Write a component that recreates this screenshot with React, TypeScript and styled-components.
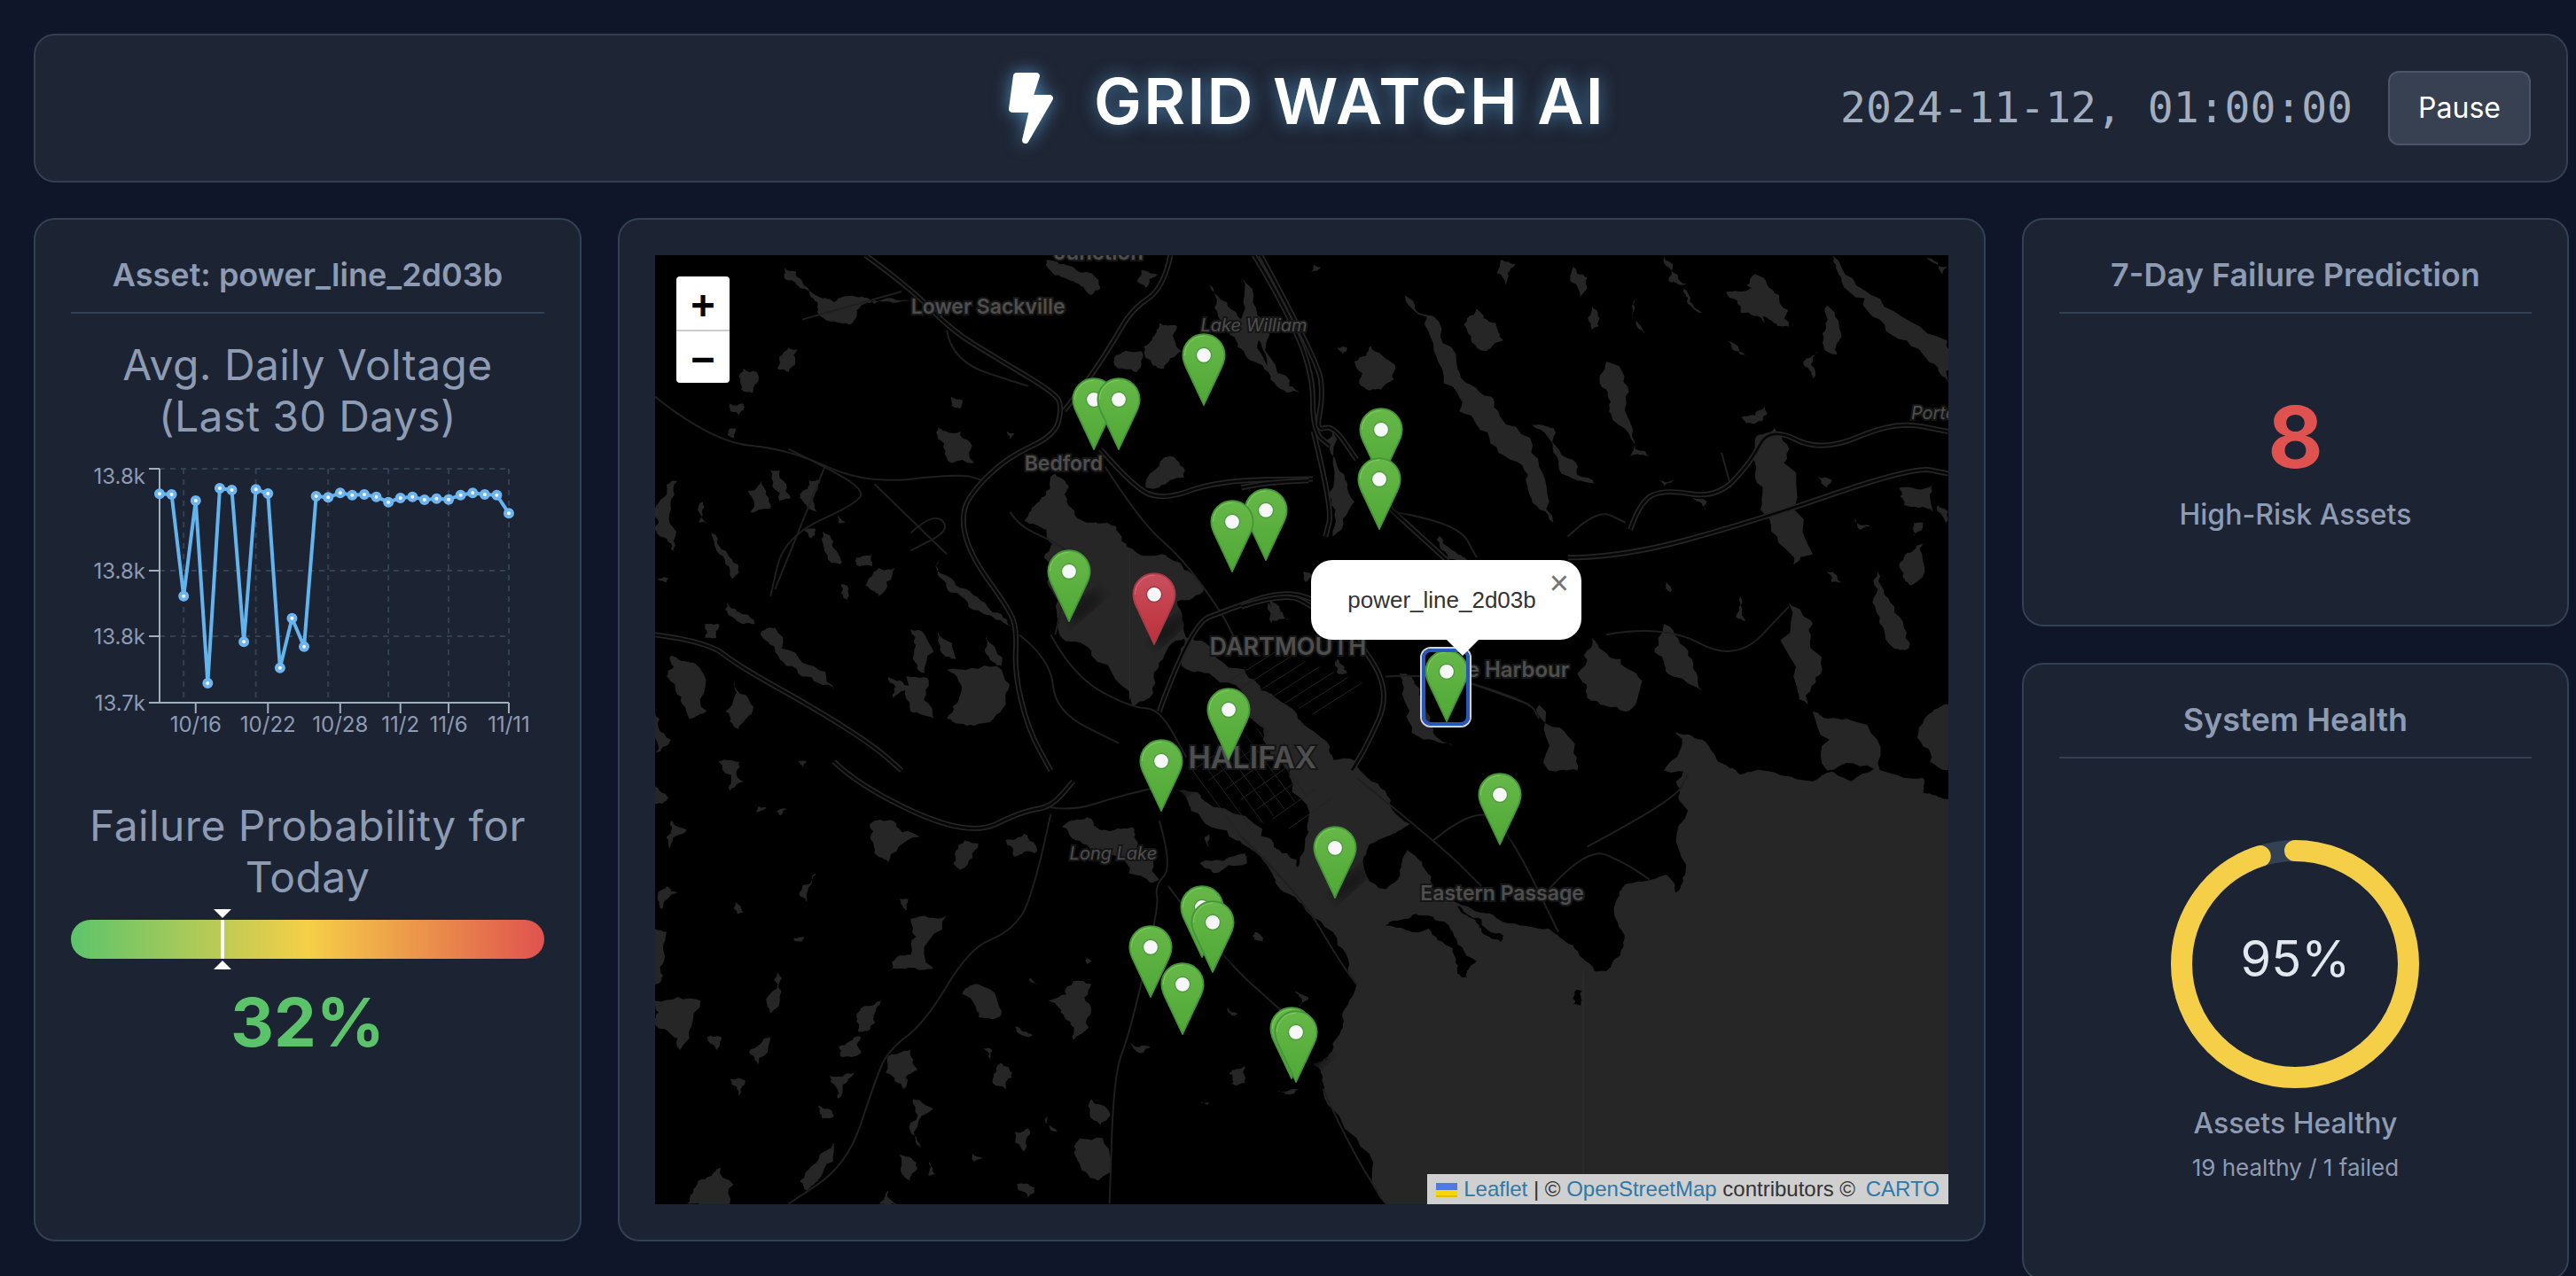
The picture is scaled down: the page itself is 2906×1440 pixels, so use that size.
import React from "react";
import styled, { createGlobalStyle } from "styled-components";
import { FaBolt } from "react-icons/fa";

const GlobalStyle = createGlobalStyle`
html, body {
    margin: 0;
    height: 100%;
    overflow: hidden;
    background: #0f1629;
    font-family: Inter, "Noto Sans", sans-serif;
}
*, *::before, *::after { box-sizing: border-box; }
`

// ---- voltage chart data, read off the plot ----
const voltage = [139,141,485,162,780,120,126,640,124,138,728,560,656,147,151,136,143,141,149,167,153,149,159,155,158,143,136,141,143,205]
const chartX = (i: number) => 100 + i * (394 / 29)
const chartY = (v: number) => 10 + v / 3
const AXIS_TOP = 28, AXIS_BOTTOM = 292, AXIS_LEFT = 100, AXIS_RIGHT = 494
const yTicks = [
    { y: AXIS_TOP, label: "13.8k", dy: 17 },
    { y: 143, label: "13.8k", dy: 9 },
    { y: 217, label: "13.8k", dy: 9 },
    { y: AXIS_BOTTOM, label: "13.7k", dy: 9 },
]
const xTicks = [{ i: 3, label: "10/16" }, { i: 9, label: "10/22" }, { i: 15, label: "10/28" }, { i: 20, label: "11/2" }, { i: 24, label: "11/6" }, { i: 29, label: "11/11" }]
const gridCols = [2, 8, 14, 19, 24, 29]

const VoltageChart = () => (
    <ChartSvg width={534} height={340} viewBox="0 0 534 340">
        {gridCols.map((i) => (
            <line key={i} x1={chartX(i)} x2={chartX(i)} y1={AXIS_TOP} y2={AXIS_BOTTOM} stroke="#334155" strokeWidth={2} strokeDasharray="6 6" />
        ))}
        {yTicks.slice(0, 3).map((t) => (
            <line key={t.y} x1={AXIS_LEFT} x2={AXIS_RIGHT} y1={t.y} y2={t.y} stroke="#334155" strokeWidth={2} strokeDasharray="6 6" />
        ))}
        <path d={`M${AXIS_LEFT} ${AXIS_TOP}V${AXIS_BOTTOM}H${AXIS_RIGHT}`} fill="none" stroke="#a0aec0" strokeWidth={2} />
        {yTicks.map((t) => (
            <g key={t.y}>
                <line x1={AXIS_LEFT - 12} x2={AXIS_LEFT} y1={t.y} y2={t.y} stroke="#a0aec0" strokeWidth={2} />
                <ChartText x={AXIS_LEFT - 16} y={t.y + t.dy} textAnchor="end">{t.label}</ChartText>
            </g>
        ))}
        {xTicks.map((t) => (
            <g key={t.label}>
                <line x1={chartX(t.i)} x2={chartX(t.i)} y1={AXIS_BOTTOM} y2={AXIS_BOTTOM + 12} stroke="#a0aec0" strokeWidth={2} />
                <ChartText x={chartX(t.i)} y={AXIS_BOTTOM + 33} textAnchor="middle">{t.label}</ChartText>
            </g>
        ))}
        <polyline fill="none" stroke="#63b3ed" strokeWidth={4} strokeLinejoin="round"
            points={voltage.map((v, i) => `${chartX(i)},${chartY(v)}`).join(" ")} />
        {voltage.map((v, i) => (
            <circle key={i} cx={chartX(i)} cy={chartY(v)} r={4} fill="#fff" stroke="#6db5f0" strokeWidth={4} />
        ))}
    </ChartSvg>
)

// ---- map drawing. each block is in the coordinates of one quarter of the map ----
const Q4 = "translate(700 250) scale(0.5102 0.3954)"
const Q5 = "translate(1400 250) scale(0.542 0.3954)"
const Q6 = "translate(700 860) scale(0.5102 0.37)"
const Q7 = "translate(1400 860) scale(0.542 0.37)"

const waterQ4 = [
    "892,855 925,800 960,720 990,760 985,800 1040,860 1075,860 1120,930 1195,950 1245,995 1290,1050 1230,1085 1250,1190 1190,1260 1155,1370 1130,1385 1040,1240 975,1190 965,1160 945,1040 935,960 940,880",
    "1245,1190 1320,1250 1400,1340 1470,1410 1568,1500 1568,1568 1480,1568 1420,1480 1380,1390 1300,1290 1240,1270",
    "360,130 400,170 430,210 470,230 520,215 560,235 640,228 560,225 530,240 505,295 440,270 425,220 395,190 360,160",
    "940,110 1000,130 1060,190 1040,210 1000,170 950,140", "1150,140 1190,150 1160,190 1140,170",
    "1300,180 1340,230 1400,300 1470,440 1500,490 1450,470 1400,400 1360,340 1320,270", "1090,390 1150,370 1140,430 1090,410",
    "1190,290 1230,300 1240,370 1200,420 1160,390 1175,330", "1160,760 1215,670 1245,730 1190,760",
    "730,500 755,510 750,535 730,525", "700,590 750,600 770,670 780,690 730,690 700,620", "855,600 870,605 860,620",
    "370,360 390,365 370,430 345,420", "270,420 300,430 290,490 265,480", "240,520 270,520 260,555 240,540", "240,590 255,590 250,620 235,610",
    "330,710 350,710 375,790 350,800", "415,740 440,740 425,790 435,830 410,810 395,780", "280,770 310,740 330,820 285,830",
    "180,800 190,860 170,860", "100,750 125,740 105,850 120,950 85,900 74,880 74,820",
    "200,890 240,960 260,1000 245,1020 210,940", "405,880 430,880 420,905", "445,885 480,950 485,980 465,975", "480,840 495,860 480,860",
    "520,960 555,950 555,985 520,980", "570,990 605,990 570,1070 540,1040", "485,1035 500,1040 500,1080 485,1060",
    "700,960 740,1040 810,1100 860,1155 800,1120 730,1060 700,1010", "235,1090 265,1120 295,1150 270,1150 235,1120",
    "310,1170 340,1160 400,1260 470,1340 400,1300 340,1230", "185,1150 215,1150 210,1190 185,1190",
    "640,1165 665,1170 670,1290 650,1260", "700,1170 740,1250 715,1240", "810,1180 840,1270 825,1260", "590,1300 640,1330 600,1360",
    "720,1280 830,1270 850,1380 780,1440 720,1420 750,1350", "630,1300 680,1310 690,1420 640,1400",
    "110,1240 160,1260 190,1400 150,1420 120,1340 100,1300", "250,1310 290,1400 260,1450 230,1400", "74,1400 110,1480 74,1520",
    "80,1020 105,1020 100,1030", "1430,1090 1460,1110 1440,1150", "1510,1000 1530,1010 1515,1030",
]
const waterQ5 = [
    "0,1290 60,1350 130,1450 185,1568 100,1568 60,1480 0,1400",
    "340,210 400,270 450,420 520,500 540,560 620,700 650,860 600,780 560,680 490,580 450,490 400,350",
    "490,250 530,290 545,340 510,370 470,310", "605,580 650,590 690,680 735,750 700,740 650,660",
    "760,400 800,500 820,650 850,670 810,670 770,550 760,480", "235,400 270,355 320,410 290,480 250,470", "200,360 220,360 210,380", "150,120 165,130 145,145",
    "540,110 570,120 550,180", "690,130 720,160 700,220 685,170", "880,100 930,180 890,170", "1010,200 1060,190 1090,290 1040,260",
    "730,240 745,300 730,310", "820,220 840,320 820,280", "920,190 960,260 930,220", "1230,96 1330,220 1470,340 1472,460 1420,380 1330,280 1250,170",
    "1420,100 1470,130 1460,150", "1070,150 1120,210 1140,300 1100,280 1060,220", "1220,240 1250,330 1240,380 1210,320", "1010,340 1050,380 1040,380",
    "1170,400 1200,370 1190,450", "1040,560 1090,530 1085,570 1050,575", "1070,620 1110,590 1130,690 1190,950 1150,980 1100,850 1070,730",
    "1200,730 1230,740 1220,760", "1370,760 1440,750 1440,830 1380,810", "1270,840 1310,870 1290,880", "1400,860 1420,860 1400,900",
    "1380,960 1420,920 1395,1040 1380,1020", "1450,810 1472,830 1472,870", "1325,1000 1360,1100 1390,1220 1360,1220 1320,1100",
    "1220,1000 1250,1030 1230,1030", "1040,1070 1050,1140 1030,1130", "885,1030 895,1060 885,1050", "410,890 440,940 470,970 430,960",
    "1140,1090 1190,1150 1210,1280 1180,1380 1150,1300", "1190,1400 1260,1420 1330,1568 1220,1568",
    "730,1190 790,1250 830,1340 800,1400 720,1360 700,1290", "880,1150 930,1240 960,1340 900,1300 860,1230", "900,1450 960,1480 1000,1568 880,1568",
    "620,1380 680,1470 700,1568 640,1568", "1440,1400 1472,1380 1472,1568 1420,1500", "330,1290 360,1320 400,1450 440,1500 380,1480 340,1370",
    "200,1250 220,1290 200,1290", "190,600 200,700 235,800 190,900 180,780", "60,1080 100,1140 60,1140", "0,160 50,300 100,470 60,440 0,300",
    "870,740 900,740 880,760", "940,790 970,800 965,830",
]
const waterQ6 = [
    "1225,85 1290,120 1420,260 1500,330 1568,360 1568,450 1500,430 1440,320 1360,240 1260,150", "1500,0 1568,0 1568,280 1520,180",
    "215,0 260,0 270,60 240,90", "390,0 410,0 400,20", "74,70 105,110 74,130", "295,130 320,140 300,155", "340,150 375,140 350,165",
    "110,180 145,210 105,270 100,230", "100,380 125,400 90,450 80,420", "400,380 430,340 410,430 395,410", "250,430 270,460 255,465",
    "550,190 600,180 660,230 590,310 560,280", "760,240 790,250 750,330 735,310", "850,240 890,220 915,280 870,290",
    "975,200 1030,170 1090,210 1130,200 1140,260 1190,360 1170,370 1100,290 1020,250", "1280,310 1380,280 1385,310 1310,340", "1290,230 1300,220 1300,260",
    "640,480 720,470 690,630 650,630 590,640 600,610 640,590", "615,420 635,420 630,455", "380,540 405,530 395,550",
    "74,510 100,520 90,620 74,680", "74,730 175,730 130,880 100,820 74,800", "190,840 220,840 210,880", "300,870 330,840 300,930 285,880",
    "520,780 575,730 550,820 525,825", "755,710 790,680 840,775 790,780", "945,730 1000,670 1040,680 1040,760 1000,850 980,780",
    "480,870 530,840 530,890 485,900", "590,900 640,880 655,940 625,1000 585,950", "460,960 515,950 480,1030", "240,970 275,975 260,1020",
    "800,875 820,880 815,910", "840,920 865,950 850,1000 830,990", "870,810 910,835 895,840", "1125,860 1170,870 1150,890", "345,640 355,660 330,770 322,740",
    "645,1030 690,1060 665,1180 640,1130", "435,1050 470,1080 445,1090", "940,1080 965,1130 950,1125", "870,1130 900,1120 890,1190", "1015,1150 1065,1150 1055,1280 1010,1220",
    "615,1200 655,1240 640,1280", "680,1220 695,1260 680,1265", "395,1280 450,1190 470,1165 440,1270 410,1310", "145,1350 170,1280 220,1240 240,1350",
    "875,1290 915,1300 900,1330", "770,1190 800,1210 780,1220", "1040,1030 1075,1060 1060,1110", "570,1350 590,1310 610,1350",
    "1345,950 1380,930 1380,980 1350,985", "1450,1005 1500,1000 1470,1015", "1340,750 1365,770 1350,775", "1490,700 1520,720 1500,750",
    "1400,520 1420,550 1400,545", "1030,600 1040,610 1030,620", "1530,920 1568,900 1568,980", "905,660 920,680 905,675", "1280,1040 1300,1040 1295,1050",
]
const ocean = "125,0 240,0 300,90 350,190 310,225 265,255 255,290 285,385 300,390 330,340 345,270 395,350 400,390 480,450 545,490 640,510 690,560 735,640 760,640 790,590 798,530 782,420 800,375 850,362 885,345 905,400 925,340 930,150 905,60 925,20 990,0 1040,40 1100,30 1190,60 1230,30 1270,60 1320,20 1420,50 1420,95 1472,115 2100,130 2100,2000 340,2000 300,1351 240,1150 170,1010 165,950 190,860 210,780 240,680 200,560 120,420 85,395 50,310 0,250 0,215 60,235 115,330 150,180 125,60"
const islands = ["390,470 440,520 490,610 470,660 450,640 440,570 390,510 300,500 340,480", "450,440 500,480 545,530 540,550 500,510 470,470", "695,700 710,700 705,745 692,740"]

// breaks the straight edges of a shape up into a coast line, same result every run
const rough = (pts: string, amp = 0.2) => {
    let p = pts.split(" ").map((s) => s.split(",").map(Number))
    let seed = pts.length * 97 + p[0][0] * 13 + p[0][1] * 7
    const rand = () => {
        seed = (seed * 16807) % 2147483647
        return (seed % 2000) / 1000 - 1
    }
    for (let round = 0; round < 3; round++) {
        const next: number[][] = []
        p.forEach((a, i) => {
            const b = p[(i + 1) % p.length]
            const dx = b[0] - a[0], dy = b[1] - a[1]
            const r = rand() * amp
            next.push(a, [(a[0] + b[0]) / 2 - dy * r, (a[1] + b[1]) / 2 + dx * r])
        })
        p = next
    }
    return p.map((v) => `${v[0].toFixed(1)},${v[1].toFixed(1)}`).join(" ")
}

const smooth = (pts: string) => {
    const p = pts.split(" ").map((s) => s.split(",").map(Number))
    let d = `M${p[0][0]} ${p[0][1]}`
    for (let i = 1; i < p.length - 1; i++) {
        d += `Q${p[i][0]} ${p[i][1]} ${(p[i][0] + p[i + 1][0]) / 2} ${(p[i][1] + p[i + 1][1]) / 2}`
    }
    return d + `L${p[p.length - 1][0]} ${p[p.length - 1][1]}`
}

const highways = [
    { q: Q4, pts: "540,96 640,190 730,310 830,390 960,490 975,530 960,610 860,670 790,750 750,830 770,950 860,1110 875,1170 870,1290 900,1450 950,1568" },
    { q: Q4, pts: "1215,96 1200,190 1130,250 1090,340 1040,440 980,540" },
    { q: Q4, pts: "74,1180 190,1200 260,1270 440,1400 560,1500 620,1568" },
    { q: Q4, pts: "1400,96 1450,200 1530,420 1530,600 1568,640" },
    { q: Q4, pts: "1060,650 1120,740 1190,800 1320,740 1530,735" },
    { q: Q4, pts: "1190,1400 1260,1150 1340,1110 1470,1050 1568,1100" },
    { q: Q5, pts: "40,96 160,400 170,500 155,600 190,580 240,680" },
    { q: Q5, pts: "150,600 190,820 175,900" },
    { q: Q5, pts: "140,740 60,745 0,760" },
    { q: Q5, pts: "310,820 430,970" },
    { q: Q5, pts: "680,960 790,960 1060,860 1400,700 1472,720" },
    { q: Q5, pts: "810,880 830,800 880,765 990,790 1060,690 1100,585 1210,660 1360,570 1472,600" },
    { q: Q5, pts: "0,1100 90,1060 150,1100 250,1200 310,1350 260,1500 230,1568" },
    { q: Q6, pts: "470,0 530,80 770,230 890,150 950,140 1000,60" },
]
const minorRoads = [
    { q: Q4, pts: "74,500 200,630 370,650 540,750 750,720 800,740" },
    { q: Q4, pts: "370,650 450,700 530,760 530,800 360,900 330,1070" },
    { q: Q4, pts: "560,750 680,900 720,950" },
    { q: Q4, pts: "1070,700 1150,860 1240,960 1330,1120 1360,1200" },
    { q: Q4, pts: "860,830 880,870 950,910 1000,950 960,1180" },
    { q: Q4, pts: "640,890 690,830 730,880 640,940" },
    { q: Q4, pts: "340,1050 450,700" },
    { q: Q4, pts: "950,1180 1000,1300 1130,1390 1190,1390 1250,1530" },
    { q: Q4, pts: "880,1180 950,1250 960,1400 1100,1490" },
    { q: Q4, pts: "400,280 620,200" },
    { q: Q4, pts: "720,310 730,400 900,470" },
    { q: Q5, pts: "480,1320 600,1370 620,1420" },
    { q: Q5, pts: "760,1180 880,1150 1030,1260 1140,1100" },
    { q: Q5, pts: "1000,660 1020,760" },
    { q: Q5, pts: "680,900 740,820 800,860" },
    { q: Q5, pts: "320,830 450,860 490,960" },
    { q: Q5, pts: "300,1300 420,1290 600,1380" },
    { q: Q6, pts: "950,160 910,420 860,520 770,570 670,800 590,880 560,980 500,1230 370,1350" },
    { q: Q6, pts: "1190,180 1220,320 1180,380 1190,440 1125,830 1090,950 1080,1350" },
    { q: Q6, pts: "1210,380 1330,600 1460,760" },
    { q: Q6, pts: "950,140 1000,150 1090,110 1180,80" },
    { q: Q7, pts: "0,230 120,400 200,600 240,680" },
    { q: Q7, pts: "400,240 500,120 570,250 660,520" },
    { q: Q7, pts: "640,390 720,260 800,310 850,360" },
    { q: Q7, pts: "720,260 900,120 930,40" },
    { q: Q7, pts: "240,50 410,250 500,380" },
    { q: Q7, pts: "170,1000 220,1160 290,1330" },
]

// street grids of Halifax and Dartmouth, in page pixels
const streets: string[] = []
for (let i = 0; i < 7; i++) {
    streets.push(`M${1345 + i * 18} ${870 + i * 11}L${1395 + i * 18} ${835 + i * 11}`)
    streets.push(`M${1345 + i * 12} ${870 - i * 8}L${1400 + i * 12} ${945 - i * 8}`)
    streets.push(`M${1385 + i * 16} ${770 + i * 6}L${1440 + i * 16} ${735 + i * 6}`)
}

const labels = [
    { x: 1188, y: 293, size: 24, text: "Junction", anchor: "start" },
    { x: 1027, y: 354, size: 23, text: "Lower Sackville", anchor: "start" },
    { x: 1354, y: 374, size: 20, text: "Lake William", anchor: "start", italic: true },
    { x: 1155, y: 531, size: 23, text: "Bedford", anchor: "start" },
    { x: 1364, y: 739, size: 27, text: "DARTMOUTH", anchor: "start" },
    { x: 1770, y: 764, size: 24, text: "Cole Harbour", anchor: "end" },
    { x: 2156, y: 473, size: 20, text: "Porte", anchor: "start", italic: true },
    { x: 1340, y: 868, size: 34, text: "HALIFAX", anchor: "start" },
    { x: 1206, y: 971, size: 20, text: "Long Lake", anchor: "start", italic: true },
    { x: 1602, y: 1017, size: 23, text: "Eastern Passage", anchor: "start" },
]

type Pin = { x: number; y: number; failed?: boolean; selected?: boolean }
// tip of each pin in page pixels, south-most last so they stack as in the map
const pins: Pin[] = [
    { x: 1357, y: 457 }, { x: 1233, y: 507 }, { x: 1261, y: 507 }, { x: 1557, y: 541 }, { x: 1555, y: 597 },
    { x: 1427, y: 632 }, { x: 1389, y: 645 }, { x: 1205, y: 701 }, { x: 1301, y: 727, failed: true },
    { x: 1631, y: 814, selected: true }, { x: 1385, y: 857 }, { x: 1309, y: 915 }, { x: 1691, y: 953 }, { x: 1505, y: 1013 },
    { x: 1355, y: 1080 }, { x: 1367, y: 1097 }, { x: 1297, y: 1125 }, { x: 1333, y: 1167 }, { x: 1456, y: 1217 }, { x: 1461, y: 1221 },
]

const MapBackdrop = () => (
    <MapSvg viewBox="738 288 1460 1072" preserveAspectRatio="none">
        <defs>
            <filter id="pin-blur"><feGaussianBlur stdDeviation="7" /></filter>
            <linearGradient id="pin-green" x1="0" y1="0" x2="0" y2="1">
                <stop offset="0" stopColor="#66b848" />
                <stop offset="1" stopColor="#4fa836" />
            </linearGradient>
            <linearGradient id="pin-red" x1="0" y1="0" x2="0" y2="1">
                <stop offset="0" stopColor="#c8505f" />
                <stop offset="1" stopColor="#bd2f38" />
            </linearGradient>
        </defs>
        <rect x="738" y="288" width="1460" height="1072" fill="#000" />
        <g fill="#262626">
            <g transform={Q7}>
                <polygon points={rough(ocean, 0.12)} />
            </g>
            <g transform={Q4}>{waterQ4.map((p) => <polygon key={p} points={rough(p)} />)}</g>
            <g transform={Q5}>{waterQ5.map((p) => <polygon key={p} points={rough(p)} />)}</g>
            <g transform={Q6}>{waterQ6.map((p) => <polygon key={p} points={rough(p)} />)}</g>
        </g>
        <g transform={Q7} fill="#000">{islands.map((p) => <polygon key={p} points={rough(p)} />)}</g>
        <path d="M1786 1097V1326M1274 625V790" stroke="#2e2e2e" strokeWidth={1} />
        <path d={streets.join("")} stroke="#222" strokeWidth={1} fill="none" />
        {minorRoads.map((r) => (
            <g key={r.pts} transform={r.q}><MinorRoad d={smooth(r.pts)} /></g>
        ))}
        {highways.map((r) => (
            <g key={r.pts} transform={r.q}>
                <RoadCasing d={smooth(r.pts)} />
                <RoadCore d={smooth(r.pts)} />
            </g>
        ))}
        {pins.map((p) => (
            <ellipse key={`${p.x}-${p.y}`} cx={p.x + 18} cy={p.y - 16} rx={26} ry={8} fill="#000" opacity={0.45}
                filter="url(#pin-blur)" transform={`rotate(-42 ${p.x + 18} ${p.y - 16})`} />
        ))}
        {labels.map((l) => (
            <MapLabel key={l.text} x={l.x} y={l.y} fontSize={l.size} textAnchor={l.anchor} $italic={l.italic}>{l.text}</MapLabel>
        ))}
    </MapSvg>
)

const PIN_PATH = "M12.5 .6C5.9 .6 .7 5.9 .7 12.4c0 2.4.7 4.5 1.7 6.6L12.5 40.4 22.6 19c1-2.1 1.7-4.2 1.7-6.6C24.3 5.9 19.1.6 12.5.6z"

const MapPin = ({ x, y, failed }: Pin) => (
    <PinSvg viewBox="0 0 25 41" style={{ left: x - 25 - 738, top: y - 81 - 288 }}>
        <path d={PIN_PATH} fill={`url(#${failed ? "pin-red" : "pin-green"})`} stroke={failed ? "#a83a48" : "#46953a"} strokeWidth={0.9} />
        <path d="M12.5 1.6C6.5 1.6 1.7 6.4 1.7 12.4" fill="none" stroke={failed ? "#d76f7d" : "#82cc62"} strokeWidth={0.5} />
        <circle cx={12.5} cy={12.4} r={4.3} fill="#f7f7f7" stroke={failed ? "#9c3442" : "#4e9a3f"} strokeWidth={0.7} />
    </PinSvg>
)

const App = () => {
    return (
        <Page>
            <GlobalStyle />
            <Header>
                <span />
                <Title>
                    <BoltIcon />
                    <TitleText>GRID WATCH AI</TitleText>
                </Title>
                <HeaderRight>
                    <Clock>2024-11-12, 01:00:00</Clock>
                    <PauseButton>Pause</PauseButton>
                </HeaderRight>
            </Header>
            <Dashboard>
                <Card>
                    <CardTitle>Asset: power_line_2d03b</CardTitle>
                    <SectionHeading $top={29}>Avg. Daily Voltage<br />(Last 30 Days)</SectionHeading>
                    <VoltageChart />
                    <SectionHeading $top={62}>Failure Probability for Today</SectionHeading>
                    <RiskBar>
                        <RiskMarker $percent={32} />
                    </RiskBar>
                    <RiskValue>32%</RiskValue>
                </Card>
                <MapCard>
                    <MapCanvas>
                        <MapBackdrop />
                        {pins.map((p) => <MapPin key={`${p.x}-${p.y}`} {...p} />)}
                        <FocusRing />
                        <ZoomControl>
                            <ZoomButton>+</ZoomButton>
                            <ZoomButton>−</ZoomButton>
                        </ZoomControl>
                        <Popup>
                            <PopupText>power_line_2d03b</PopupText>
                            <PopupClose>×</PopupClose>
                            <PopupTip />
                        </Popup>
                        <Attribution>
                            <UkraineFlag viewBox="0 0 12 8">
                                <path fill="#4C7BE1" d="M0 0h12v4H0z" />
                                <path fill="#FFD500" d="M0 4h12v3H0z" />
                                <path fill="#E0BC00" d="M0 7h12v1H0z" />
                            </UkraineFlag>
                            <AttrLink>Leaflet</AttrLink> <Sep>|</Sep> © <AttrLink>OpenStreetMap</AttrLink> contributors © <CartoLink>CARTO</CartoLink>
                        </Attribution>
                    </MapCanvas>
                </MapCard>
                <SideColumn>
                    <Card $height={461}>
                        <CardTitle>7-Day Failure Prediction</CardTitle>
                        <BigCount>8</BigCount>
                        <StatLabel>High-Risk Assets</StatLabel>
                    </Card>
                    <Card $height={697}>
                        <CardTitle>System Health</CardTitle>
                        <DonutWrap>
                            <svg width={280} height={280} viewBox="0 0 280 280">
                                <circle cx={140} cy={140} r={128} fill="none" stroke="#334155" strokeWidth={24} />
                                <circle cx={140} cy={140} r={128} fill="none" stroke="#f5cf47" strokeWidth={24} strokeLinecap="round"
                                    strokeDasharray={`${2 * Math.PI * 128 * 0.95} ${2 * Math.PI * 128}`} transform="rotate(-90 140 140)" />
                            </svg>
                            <DonutValue>95%</DonutValue>
                        </DonutWrap>
                        <HealthLabel>Assets Healthy</HealthLabel>
                        <HealthDetail>19 healthy / 1 failed</HealthDetail>
                    </Card>
                </SideColumn>
            </Dashboard>
        </Page>
    )
}

const Page = styled.div`
display: flex;
flex-direction: column;
gap: 40px;
padding: 38px 8px 0 38px;
height: 1440px;
`

const Header = styled.header`
display: grid;
grid-template-columns: 1fr auto 1fr;
align-items: center;
height: 168px;
margin-right: 1px;
padding: 0 40px;
background: #1e2534;
border: 2px solid #343f52;
border-radius: 24px;
`

const Title = styled.div`
display: flex;
align-items: center;
gap: 46px;
padding-left: 14px;
color: #fff;
`

const BoltIcon = styled(FaBolt)`
width: 50px;
height: 80px;
filter: drop-shadow(0 0 10px rgba(99, 179, 237, 0.7));
`

const TitleText = styled.h1`
margin: 0 0 18px;
font-size: 72px;
font-weight: 600;
letter-spacing: 2.2px;
color: #fff;
text-shadow: 0 0 20px rgba(99, 179, 237, 0.6);
`

const HeaderRight = styled.div`
display: flex;
align-items: center;
justify-content: flex-end;
gap: 40px;
`

const Clock = styled.div`
margin-bottom: 3px;
font-family: "DejaVu Sans Mono", monospace;
font-size: 48px;
color: #a0aec0;
white-space: nowrap;
`

const PauseButton = styled.button`
width: 161px;
height: 84px;
padding: 0 0 2px;
font-family: Inter, sans-serif;
font-size: 32px;
font-weight: 400;
color: #fff;
background: #374151;
border: 2px solid #4a5568;
border-radius: 12px;
`

const Dashboard = styled.div`
display: grid;
grid-template-columns: 1fr 2.5fr 1fr;
grid-template-rows: 1155px;
gap: 41px;
`

const Card = styled.section<{ $height?: number }>`
display: flex;
flex-direction: column;
height: ${(props) => (props.$height ? `${props.$height}px` : "100%")};
flex-shrink: 0;
padding: 40px;
background: #1c2333;
border: 2px solid #334155;
border-radius: 24px;
`

const MapCard = styled(Card)`
padding: 40px;
`

const SideColumn = styled.div`
display: flex;
flex-direction: column;
gap: 41px;
`

const CardTitle = styled.h2`
margin: 0;
padding-bottom: 20px;
font-size: 36px;
font-weight: 600;
text-align: center;
color: #8d9bb3;
border-bottom: 2px solid #334155;
`

const SectionHeading = styled.h3<{ $top: number }>`
margin: ${(props) => props.$top}px 0 0;
font-size: 48px;
font-weight: 400;
line-height: 57.6px;
letter-spacing: 0.4px;
text-align: center;
color: #8d9bb3;
`

const ChartSvg = styled.svg`
display: block;
flex-shrink: 0;
margin-top: 3px;
`

const ChartText = styled.text`
font-size: 24px;
fill: #8d9bb3;
font-family: Inter, sans-serif;
`

const RiskBar = styled.div`
position: relative;
flex-shrink: 0;
height: 44px;
margin-top: 20px;
border-radius: 22px;
background: linear-gradient(90deg, #5cc46b 0%, #f5cf47 50%, #e0534f 100%);
`

const RiskMarker = styled.div<{ $percent: number }>`
position: absolute;
top: 0;
bottom: 0;
left: ${(props) => props.$percent}%;
width: 4px;
margin-left: -2px;
background: #fff;
&::before, &::after {
    content: "";
    position: absolute;
    left: -8px;
    border-left: 10px solid transparent;
    border-right: 10px solid transparent;
}
&::before {
    top: -12px;
    border-top: 10px solid #fff;
}
&::after {
    bottom: -12px;
    border-bottom: 10px solid #fff;
}
`

const RiskValue = styled.div`
margin-top: 25px;
font-size: 76px;
font-weight: 700;
text-align: center;
color: #5bc46a;
`

const MapCanvas = styled.div`
position: relative;
flex: 1;
overflow: hidden;
background: #000;
`

const MapSvg = styled.svg`
display: block;
width: 100%;
height: 100%;
`

const MinorRoad = styled.path`
fill: none;
stroke: #1f1f1f;
stroke-width: 2;
vector-effect: non-scaling-stroke;
`

const RoadCasing = styled.path`
fill: none;
stroke: #252525;
stroke-width: 6;
stroke-linejoin: round;
vector-effect: non-scaling-stroke;
`

const RoadCore = styled.path`
fill: none;
stroke: #060606;
stroke-width: 2.5;
stroke-linejoin: round;
vector-effect: non-scaling-stroke;
`

const MapLabel = styled.text<{ $italic?: boolean }>`
font-family: Inter, sans-serif;
font-weight: ${(props) => (props.$italic ? 400 : 600)};
font-style: ${(props) => (props.$italic ? "italic" : "normal")};
fill: #4e4e4e;
stroke: #161616;
stroke-width: 4px;
paint-order: stroke;
`

const PinSvg = styled.svg`
position: absolute;
width: 50px;
height: 82px;
`

const FocusRing = styled.div`
position: absolute;
left: 865px;
top: 444px;
width: 54px;
height: 87px;
border: 4px solid #2557bd;
border-radius: 10px;
box-shadow: 0 0 0 2px #d4d4d4;
`

const ZoomControl = styled.div`
position: absolute;
left: 24px;
top: 24px;
width: 60px;
background: #fff;
border-radius: 4px;
overflow: hidden;
`

const ZoomButton = styled.div`
display: flex;
align-items: center;
justify-content: center;
height: 60px;
padding-top: 3px;
font-family: "DejaVu Sans Mono", monospace;
font-size: 44px;
font-weight: 700;
color: #000;
& + & {
    border-top: 2px solid #ccc;
}
`

const Popup = styled.div`
position: absolute;
left: 740px;
top: 344px;
width: 305px;
height: 90px;
background: #fff;
border-radius: 24px;
`

const PopupText = styled.div`
padding-top: 30px;
text-align: center;
margin-right: 10px;
font-family: "Liberation Sans", Arial, sans-serif;
font-size: 26px;
line-height: 30px;
color: #333;
`

const PopupClose = styled.span`
position: absolute;
right: 14px;
top: 4px;
font-family: "Liberation Sans", Arial, sans-serif;
font-size: 38px;
line-height: 44px;
color: #757575;
`

const PopupTip = styled.div`
position: absolute;
left: 153px;
bottom: -18px;
width: 0;
height: 0;
border-left: 18px solid transparent;
border-right: 18px solid transparent;
border-top: 18px solid #fff;
`

const Attribution = styled.div`
position: absolute;
right: 0;
bottom: 0;
height: 34px;
padding: 0 10px;
font-family: "Liberation Sans", Arial, sans-serif;
font-size: 24px;
line-height: 34px;
color: #333;
background: #d0d0d0;
white-space: nowrap;
`

const UkraineFlag = styled.svg`
display: inline-block;
width: 24px;
height: 16px;
margin-right: 7px;
vertical-align: -1px;
`

const AttrLink = styled.span`
color: #2f79a8;
`

const CartoLink = styled(AttrLink)`
margin-left: 5px;
`

const Sep = styled.span`
font-weight: 400;
`

const BigCount = styled.div`
margin-top: 81px;
font-size: 96px;
font-weight: 700;
line-height: 116px;
text-align: center;
color: #e0524f;
`

const StatLabel = styled.div`
margin-top: 10px;
font-size: 32px;
font-weight: 500;
text-align: center;
color: #8d9bb3;
`

const DonutWrap = styled.div`
position: relative;
align-self: center;
width: 280px;
height: 280px;
margin-top: 92px;
flex-shrink: 0;
svg { display: block; }
`

const DonutValue = styled.div`
position: absolute;
left: 0;
right: 0;
top: 100px;
font-size: 56px;
font-weight: 400;
line-height: 68px;
text-align: center;
color: #e2e8f0;
`

const HealthLabel = styled.div`
margin-top: 20px;
font-size: 32px;
font-weight: 500;
text-align: center;
color: #8d9bb3;
`

const HealthDetail = styled.div`
margin-top: 15px;
font-size: 26px;
text-align: center;
color: #8d9bb3;
`

export default App;
